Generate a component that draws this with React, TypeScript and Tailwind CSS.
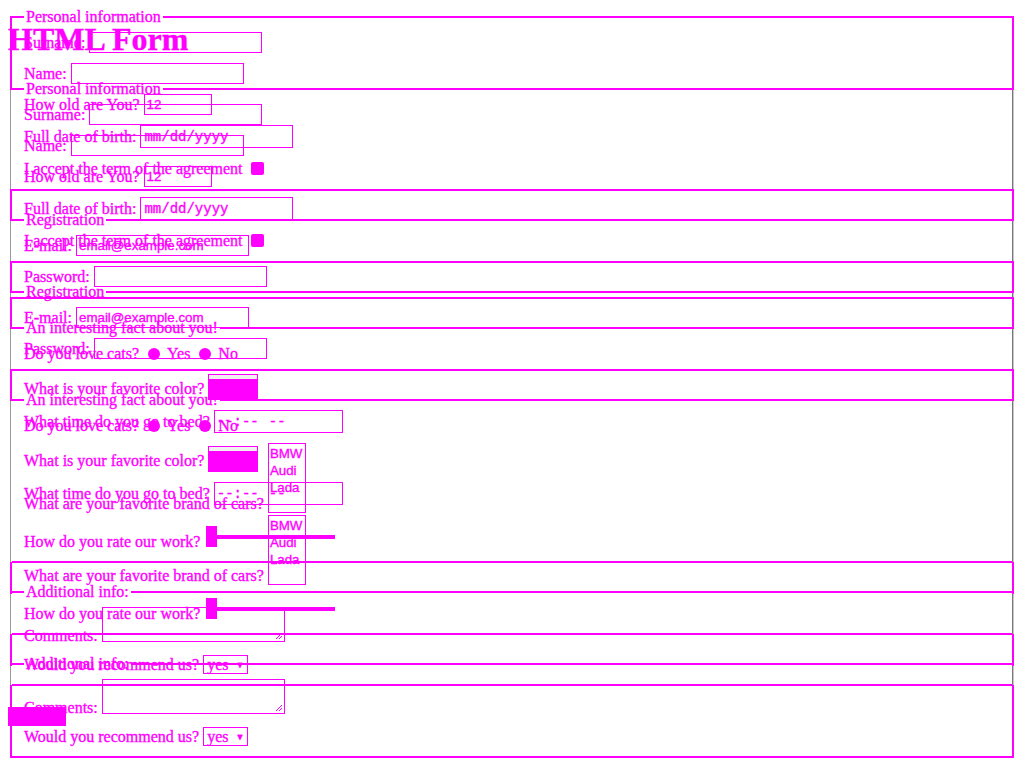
import React from "react";

// where the two stacked copies of the form share a side border, the edge shows grey
const edgeSegments: [number, boolean][] = [
  [90, false],
  [99, true],
  [32, false],
  [40, true],
  [32, false],
  [4, true],
  [32, false],
  [40, true],
  [32, false],
  [161, true],
  [32, false],
  [40, true],
  [32, false],
  [19, true],
];

const Edge = ({ right }: { right?: boolean }) => (
  <div className={right ? "absolute top-0 left-[1012px] w-[2px] flex flex-col" : "absolute top-0 left-[10px] w-[2px] flex flex-col"}>
    {edgeSegments.map(([h, grey], i) => (
      <div
        key={i}
        style={{ height: h }}
        className={grey ? (right ? "border-l border-[#777777] bg-[#c8c8c8]" : "border-l border-[#999999] bg-white") : ""}
      />
    ))}
  </div>
);

const sans = "font-['Liberation_Sans',Arial,sans-serif] text-[13.33px] leading-[15px]";
const mono = "font-['Liberation_Mono','Courier_New',monospace] text-[14px] leading-[16px]";

const TextBox = ({ value = "" }: { value?: string }) => (
  <span className={`flex items-center w-[173px] h-[21px] border border-[#ff00ff] pl-[2px] ${sans}`}>{value}</span>
);

const Check = () => <span className="ml-[4px] w-[13px] h-[13px] rounded-[2px] bg-[#ff00ff]" />;

const Radio = () => <span className="ml-[5px] mr-[3px] w-[12px] h-[12px] rounded-full bg-[#ff00ff]" />;

const Row = ({ children, className = "h-[21px] items-center" }: { children: React.ReactNode; className?: string }) => (
  <div className={`flex gap-[4px] ${className}`}>{children}</div>
);

const Fieldset = ({ legend, children, first }: { legend: string; children: React.ReactNode; first?: boolean }) => (
  <fieldset className={`${first ? "" : "mt-[20px]"} mx-[2px] border-2 border-[#ff00ff] px-[12px] pt-[6px] pb-[10px]`}>
    <legend className="px-[2px] leading-[18px]">{legend}</legend>
    <div className="flex flex-col gap-[10px]">{children}</div>
  </fieldset>
);

const HtmlForm = ({ withButton }: { withButton?: boolean }) => (
  <form className="flex flex-col">
    <Fieldset legend="Personal information" first>
      <Row>
        <label>Surname:</label>
        <TextBox />
      </Row>
      <Row>
        <label>Name:</label>
        <TextBox />
      </Row>
      <Row>
        <label>How old are You?</label>
        <span className={`flex items-center w-[68px] h-[21px] border border-[#ff00ff] pl-[2px] ${sans}`}>12</span>
      </Row>
      <Row className="h-[23px] items-center">
        <label>Full date of birth:</label>
        <span className={`flex items-center w-[153px] h-[23px] border border-[#ff00ff] pl-[3px] ${mono}`}>mm/dd/yyyy</span>
      </Row>
      <Row>
        <label>I accept the term of the agreement</label>
        <Check />
      </Row>
    </Fieldset>

    <Fieldset legend="Registration">
      <Row>
        <label>E-mail:</label>
        <TextBox value="email@example.com" />
      </Row>
      <Row>
        <label>Password:</label>
        <TextBox />
      </Row>
    </Fieldset>

    <Fieldset legend="An interesting fact about you!">
      <Row>
        <label>Do you love cats?</label>
        <Radio />
        <span>Yes</span>
        <Radio />
        <span>No</span>
      </Row>
      <Row className="h-[26px] items-end">
        <label className="mb-[2px]">What is your favorite color?</label>
        <span className="flex flex-col w-[50px] h-[26px] border border-[#ff00ff] bg-[#ff00ff]">
          <span className="h-[4px] bg-[#f0f0f0]" />
        </span>
      </Row>
      <Row className="h-[23px] items-center">
        <label>What time do you go to bed?</label>
        <span className={`flex items-center w-[129px] h-[23px] border border-[#ff00ff] pl-[2px] ${mono}`}>
          <span>--:--</span>
          <span className="ml-[10px]">--</span>
        </span>
      </Row>
      <Row className="h-[70px] items-end">
        <label>What are your favorite brand of cars?</label>
        <span className={`flex flex-col w-[38px] h-[70px] border border-[#ff00ff] pl-[1px] pt-[1px] ${sans} leading-[17px]`}>
          <span>BMW</span>
          <span>Audi</span>
          <span>Lada</span>
        </span>
      </Row>
      <Row className="h-[28px] items-end">
        <label>How do you rate our work?</label>
        <span className="ml-[2px] mb-[4px] flex items-center w-[129px] h-[21px]">
          <span className="w-[11px] h-[21px] bg-[#ff00ff]" />
          <span className="flex-1 h-[4px] bg-[#ff00ff]" />
        </span>
      </Row>
    </Fieldset>

    <Fieldset legend="Additional info:">
      <Row className="h-[38px] items-end">
        <label>Comments:</label>
        <span className="mb-[3px] flex items-end justify-end w-[183px] h-[35px] border border-[#ff00ff] p-[1px]">
          <svg width="8" height="8" viewBox="0 0 8 8">
            <path d="M7 1 L1 7 M7 4 L4 7" stroke="#ff00ff" strokeWidth="1" />
          </svg>
        </span>
      </Row>
      <Row className="h-[19px] items-center">
        <label>Would you recommend us?</label>
        <span className="flex items-center w-[45px] h-[19px] border border-[#ff00ff] pl-[3px]">
          <span className="leading-[17px]">yes</span>
          <span className="ml-[7px] text-[9px] leading-[10px]">▼</span>
        </span>
      </Row>
    </Fieldset>

    {withButton && (
      <button type="submit" className="self-start mt-[21px] w-[58px] h-[19px] bg-[#ff00ff] text-[#ff00ff] text-[13.33px] font-['Liberation_Sans',Arial,sans-serif]">
        Submit
      </button>
    )}
  </form>
);

export default function App() {
  return (
    <div className="relative w-[1024px] h-[768px] overflow-hidden bg-white text-[#ff00ff] text-[16px] leading-[18px] font-['Liberation_Serif','Times_New_Roman',serif] [-webkit-text-stroke:0.35px_#ff00ff]">
      <div className="px-[8px] pt-[21px]">
        <h1 className="mb-[22px] text-[32px] leading-[37px] font-bold">HTML Form</h1>
        <HtmlForm />
      </div>
      <div className="absolute top-0 left-0 right-0 px-[8px] pt-[8px]">
        <HtmlForm withButton />
      </div>
      <Edge />
      <Edge right />
    </div>
  );
}
